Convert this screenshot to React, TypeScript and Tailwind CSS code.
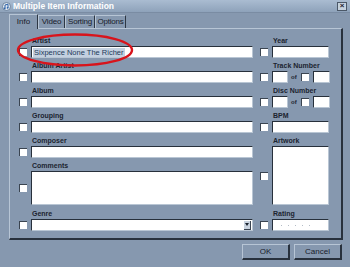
export default function App() {
  const font = "font-['Liberation_Sans',Arial,sans-serif]";

  const Check = () => (
    <div className="w-[8px] h-[8px] shrink-0 bg-white border-t border-l border-[#3a4450] border-r-[#c9d3de] border-b-[#c9d3de]" />
  );

  const Field = ({ w, h = 12, children }: { w: number | string; h?: number; children?: React.ReactNode }) => (
    <div
      className="bg-white border-t border-l border-[#27303b] border-r border-b border-r-[#b9c6d4] border-b-[#b9c6d4] flex items-center overflow-hidden"
      style={{ width: w, height: h }}
    >
      {children}
    </div>
  );

  const Label = ({ text }: { text: string }) => (
    <div className="h-[13px] flex items-end pb-[2px] pl-[1px] text-[7px] font-bold leading-none text-[#1c2430]">{text}</div>
  );

  return (
    <div className={`w-[350px] h-[267px] bg-[#8698af] relative overflow-hidden ${font}`}>
      {/* title bar */}
      <div className="h-[13px] bg-gradient-to-b from-[#aabcd1] to-[#8ea2ba] flex items-center px-[2px] gap-[2px] border-b border-[#7a8ca3]">
        <svg width="9" height="9" viewBox="0 0 9 9">
          <circle cx="4.5" cy="4.5" r="4" fill="#dfe7f0" stroke="#5a7390" strokeWidth="0.8" />
          <path d="M3 6.5V3l3-0.8v3.6" stroke="#2c62a8" strokeWidth="1" fill="none" />
          <circle cx="2.6" cy="6.4" r="0.9" fill="#2c62a8" />
          <circle cx="5.6" cy="5.8" r="0.9" fill="#2c62a8" />
        </svg>
        <span className="text-[8.5px] font-bold text-white leading-none">Multiple Item Information</span>
        <div className="ml-auto mr-[1px] w-[10px] h-[9px] bg-[#c5d1de] border border-[#4b5868] flex items-center justify-center text-[8px] font-bold leading-none text-[#1b232e]">
          ×
        </div>
      </div>

      {/* tabs */}
      <div className="flex items-end pl-[9px] mt-[1px] h-[15px] relative z-10">
        <div className="h-[15px] w-[29px] border-t border-l border-[#b7c5d5] border-r border-r-[#2d3744] bg-[#8698af] text-[8px] text-[#18202b] flex items-center justify-center leading-none">
          Info
        </div>
        {[
          ["Video", "w-[27px]"],
          ["Sorting", "w-[30px]"],
          ["Options", "w-[31px]"],
        ].map(([t, w]) => (
          <div
            key={t}
            className={`h-[13px] ${w} mb-[1px] border-t border-l border-[#b7c5d5] border-r border-r-[#2d3744] text-[8px] tracking-[-0.2px] text-[#18202b] flex items-center justify-center leading-none`}
          >
            {t}
          </div>
        ))}
      </div>

      {/* panel */}
      <div className="ml-[9px] w-[334px] h-[212px] -mt-[1px] border-t border-l border-[#b7c5d5] border-r-2 border-b-2 border-r-[#28313d] border-b-[#28313d] pl-[9px] pt-[4px] flex gap-[7px]">
        {/* left column */}
        <div className="flex flex-col">
          {["Artist", "Album Artist", "Album", "Grouping", "Composer"].map((l, i) => (
            <div key={l} className="flex flex-col">
              <div className="pl-[12px]">
                <Label text={l} />
              </div>
              <div className="flex items-center gap-[4px]">
                <Check />
                <Field w={222}>
                  {i === 0 && (
                    <span className="ml-[1px] px-[1px] bg-[#c3d0e0] text-[7.5px] leading-[9px] text-[#243a5a]">
                      Sixpence None The Richer
                    </span>
                  )}
                </Field>
              </div>
            </div>
          ))}
          <div className="pl-[12px]">
            <Label text="Comments" />
          </div>
          <div className="flex items-center gap-[4px]">
            <Check />
            <Field w={222} h={34} />
          </div>
          <div className="pl-[12px] mt-[1px]">
            <Label text="Genre" />
          </div>
          <div className="flex items-center gap-[4px]">
            <Check />
            <Field w={222}>
              <div className="ml-auto mr-[1px] w-[7px] h-[9px] bg-[#c9d3df] border-r border-b border-[#3a4450] flex items-center justify-center">
                <svg width="4" height="3" viewBox="0 0 4 3">
                  <path d="M0 0h4L2 3z" fill="#1b232e" />
                </svg>
              </div>
            </Field>
          </div>
        </div>

        {/* right column */}
        <div className="flex flex-col">
          <div className="pl-[12px]">
            <Label text="Year" />
          </div>
          <div className="flex items-center gap-[4px]">
            <Check />
            <Field w={57} />
          </div>
          {["Track Number", "Disc Number"].map((l) => (
            <div key={l} className="flex flex-col">
              <div className="pl-[12px]">
                <Label text={l} />
              </div>
              <div className="flex items-center gap-[4px]">
                <Check />
                <Field w={16} />
                <span className="text-[6px] font-bold text-[#1c2430] leading-none -ml-[1px]">of</span>
                <Check />
                <Field w={17} />
              </div>
            </div>
          ))}
          <div className="pl-[12px]">
            <Label text="BPM" />
          </div>
          <div className="flex items-center gap-[4px]">
            <Check />
            <Field w={57} />
          </div>
          <div className="pl-[12px]">
            <Label text="Artwork" />
          </div>
          <div className="flex items-center gap-[4px]">
            <Check />
            <Field w={57} h={59} />
          </div>
          <div className="pl-[12px] mt-[1px]">
            <Label text="Rating" />
          </div>
          <div className="flex items-center gap-[4px]">
            <Check />
            <Field w={57}>
              <div className="flex gap-[6px] pl-[8px]">
                {[0, 1, 2, 3, 4].map((d) => (
                  <div key={d} className="w-[1px] h-[1px] bg-[#b4bcc6]" />
                ))}
              </div>
            </Field>
          </div>
        </div>
      </div>

      {/* buttons */}
      <div className="flex justify-end gap-[4px] pr-[8px] mt-[4px]">
        {["OK", "Cancel"].map((b) => (
          <div
            key={b}
            className="w-[48px] h-[16px] border-t border-l border-[#b7c5d5] border-r-2 border-b-2 border-r-[#28313d] border-b-[#28313d] flex items-center justify-center text-[8px] text-[#18202b] leading-none"
          >
            {b}
          </div>
        ))}
      </div>

      {/* red annotation ellipse */}
      <svg className="absolute left-0 top-0 pointer-events-none" width="350" height="267">
        <ellipse cx="75" cy="50" rx="57" ry="15.5" fill="none" stroke="#d8141c" strokeWidth="2.4" />
      </svg>
    </div>
  );
}
